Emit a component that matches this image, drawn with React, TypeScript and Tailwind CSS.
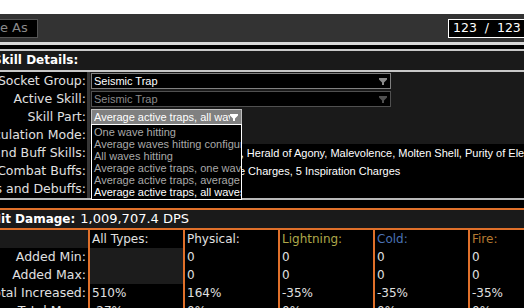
import React from 'react';

const Arrow = ({ color }: { color: string }) => (
  <svg width="8" height="7" viewBox="0 0 8 7" className="shrink-0">
    <path d="M0 0H8V1.5L5 4.5V7H3V4.5L0 1.5Z" fill={color} />
  </svg>
);

const partOptions = [
  { label: 'One wave hitting', active: false },
  { label: 'Average waves hitting configured area', active: false },
  { label: 'All waves hitting', active: false },
  { label: 'Average active traps, one wave hitting', active: false },
  { label: 'Average active traps, average waves hitting', active: false },
  { label: 'Average active traps, all waves hitting', active: true },
];

const damageCols = [
  { name: 'All Types:', color: 'text-[#e0e0e0]' },
  { name: 'Physical:', color: 'text-[#e0e0e0]' },
  { name: 'Lightning:', color: 'text-[#aea84a]' },
  { name: 'Cold:', color: 'text-[#4a72b4]' },
  { name: 'Fire:', color: 'text-[#b47a32]' },
];

const damageRows = [
  { label: 'Added Min:', values: ['', '0', '0', '0', '0'], shaded: true },
  { label: 'Added Max:', values: ['', '0', '0', '0', '0'], shaded: true },
  { label: 'Total Increased:', values: ['510%', '164%', '-35%', '-35%', '-35%'], shaded: false },
  { label: 'Total More:', values: ['-27%', '0%', '0%', '0%', '0%'], shaded: false },
];

const Label = ({ text }: { text: string }) => (
  <div className="flex w-[87px] shrink-0 items-center justify-end overflow-visible whitespace-nowrap bg-black pr-[1px] text-[12.5px] text-[#e0e0e0]">
    {text}
  </div>
);

const App = () => {
  return (
    <div className="h-[308px] w-[524px] overflow-hidden bg-black font-['DejaVu_Sans',sans-serif] text-[#e0e0e0]">
      <div className="h-[14px] bg-white" />

      <div className="flex h-[28px] items-center justify-between bg-[#333333]">
        <div className="-ml-[28px] flex h-[19px] items-center border border-[#555] bg-black pl-[3px] pr-[9px] text-[13px] text-[#8a8a8a]">
          Save As
        </div>
        <div className="-mr-[40px] flex h-[19px] w-[116px] items-center whitespace-pre border border-white bg-black pl-[4px] text-[12.5px] text-white">
          123  /  123
        </div>
      </div>

      <div className="h-[3px] bg-[#d8d8d8]" />
      <div className="h-[4px] bg-black" />
      <div className="h-[2px] bg-[#c8c8c8]" />

      <div className="-ml-[7px] h-[19px] bg-[#1a1a1a] text-[12px] font-bold leading-[19px] text-white">
        Skill Details:
      </div>
      <div className="h-[2px] bg-[#c8c8c8]" />

      <div>
        <div className="flex h-[18px]">
          <Label text="Socket Group:" />
          <div className="w-[3px] bg-[#363636]" />
          <div className="flex-1 bg-[#1a1a1a] pl-[1px] pt-[1px]">
            <div className="flex h-[16px] w-[300px] items-center justify-between border border-[#808080] bg-black pl-[2px] pr-[3px] font-['Liberation_Sans',sans-serif] text-[11px] text-white">
              Seismic Trap
              <Arrow color="#8a8a8a" />
            </div>
          </div>
        </div>
        <div className="flex h-[18px]">
          <Label text="Active Skill:" />
          <div className="w-[3px] bg-[#363636]" />
          <div className="flex-1 bg-[#1a1a1a] pl-[1px] pt-[1px]">
            <div className="flex h-[16px] w-[300px] items-center justify-between border border-[#505050] bg-black pl-[2px] pr-[3px] font-['Liberation_Sans',sans-serif] text-[11px] text-[#8a8a8a]">
              Seismic Trap
              <Arrow color="#505050" />
            </div>
          </div>
        </div>
        <div className="flex h-[18px]">
          <Label text="Skill Part:" />
          <div className="w-[3px] bg-[#363636]" />
          <div className="flex-1 bg-[#1a1a1a] pl-[1px] pt-[1px]">
            <div className="relative w-[151px]">
              <div className="flex h-[16px] items-center justify-between overflow-hidden whitespace-nowrap border border-[#c0c0c0] bg-[#808080] pl-[2px] pr-[3px] font-['Liberation_Sans',sans-serif] text-[11px] text-white">
                <span className="overflow-hidden">Average active traps, all waves hitting</span>
                <Arrow color="#ffffff" />
              </div>
              <div className="absolute left-0 top-[15px] z-10 w-[151px] overflow-hidden border border-white bg-black py-[1px] font-['Liberation_Sans',sans-serif] text-[11px]">
                {partOptions.map((opt) => (
                  <div
                    key={opt.label}
                    className={`h-[12px] overflow-hidden whitespace-nowrap pl-[2px] leading-[12px] ${opt.active ? 'text-white' : 'text-[#a8a8a8]'}`}
                  >
                    {opt.label}
                  </div>
                ))}
              </div>
            </div>
          </div>
        </div>
        <div className="flex h-[18px]">
          <Label text="Calculation Mode:" />
          <div className="w-[3px] bg-[#363636]" />
          <div className="flex-1 bg-[#1a1a1a]" />
        </div>
        <div className="flex h-[18px]">
          <Label text="Aura and Buff Skills:" />
          <div className="w-[3px] bg-[#363636]" />
          <div className="flex flex-1 items-center overflow-hidden whitespace-nowrap bg-black pl-[4px] font-['Liberation_Sans',sans-serif] text-[11px] text-white">
            Blood Rage, Discipline, Grace, Herald of Agony, Malevolence, Molten Shell, Purity of Elements
          </div>
        </div>
        <div className="flex h-[18px]">
          <Label text="Combat Buffs:" />
          <div className="w-[3px] bg-[#363636]" />
          <div className="flex flex-1 items-center overflow-hidden whitespace-nowrap bg-black pl-[4px] font-['Liberation_Sans',sans-serif] text-[11px] text-white">
            Onslaught, Elusive, Endurance Charges, 5 Inspiration Charges
          </div>
        </div>
        <div className="flex h-[18px]">
          <Label text="Enemy Conditions and Debuffs:" />
          <div className="w-[3px] bg-[#363636]" />
          <div className="flex-1 bg-black" />
        </div>
      </div>

      <div className="h-[2px] bg-[#b8b8b8]" />
      <div className="h-[8px] bg-black" />
      <div className="h-[2px] bg-[#e0702a]" />
      <div className="-ml-[9px] flex h-[18px] items-center gap-[5px] whitespace-nowrap bg-[#1a1a1a] text-[13px] text-white">
        <span className="text-[12px] font-bold">Hit Damage:</span>
        <span>1,009,707.4 DPS</span>
      </div>
      <div className="h-[2px] bg-[#e0702a]" />

      <div className="flex h-[18px]">
        <div className="w-[88px] shrink-0 bg-[#1a1a1a]" />
        {damageCols.map((col) => (
          <div
            key={col.name}
            className={`flex w-[95px] shrink-0 items-center border-l-2 border-[#e0702a] pl-[2px] text-[12px] ${col.color}`}
          >
            {col.name}
          </div>
        ))}
      </div>
      {damageRows.map((row) => (
        <div key={row.label} className="flex h-[18px]">
          <div className="flex w-[88px] shrink-0 items-center justify-end whitespace-nowrap pr-[2px] text-[12.5px]">
            {row.label}
          </div>
          {row.values.map((v, i) => (
            <div
              key={i}
              className={`flex w-[95px] shrink-0 items-center border-l-2 border-[#e0702a] pl-[2px] text-[12px] ${i === 0 && row.shaded ? 'bg-[#1c1c1c]' : ''}`}
            >
              {v}
            </div>
          ))}
        </div>
      ))}
    </div>
  );
};

export default App;
